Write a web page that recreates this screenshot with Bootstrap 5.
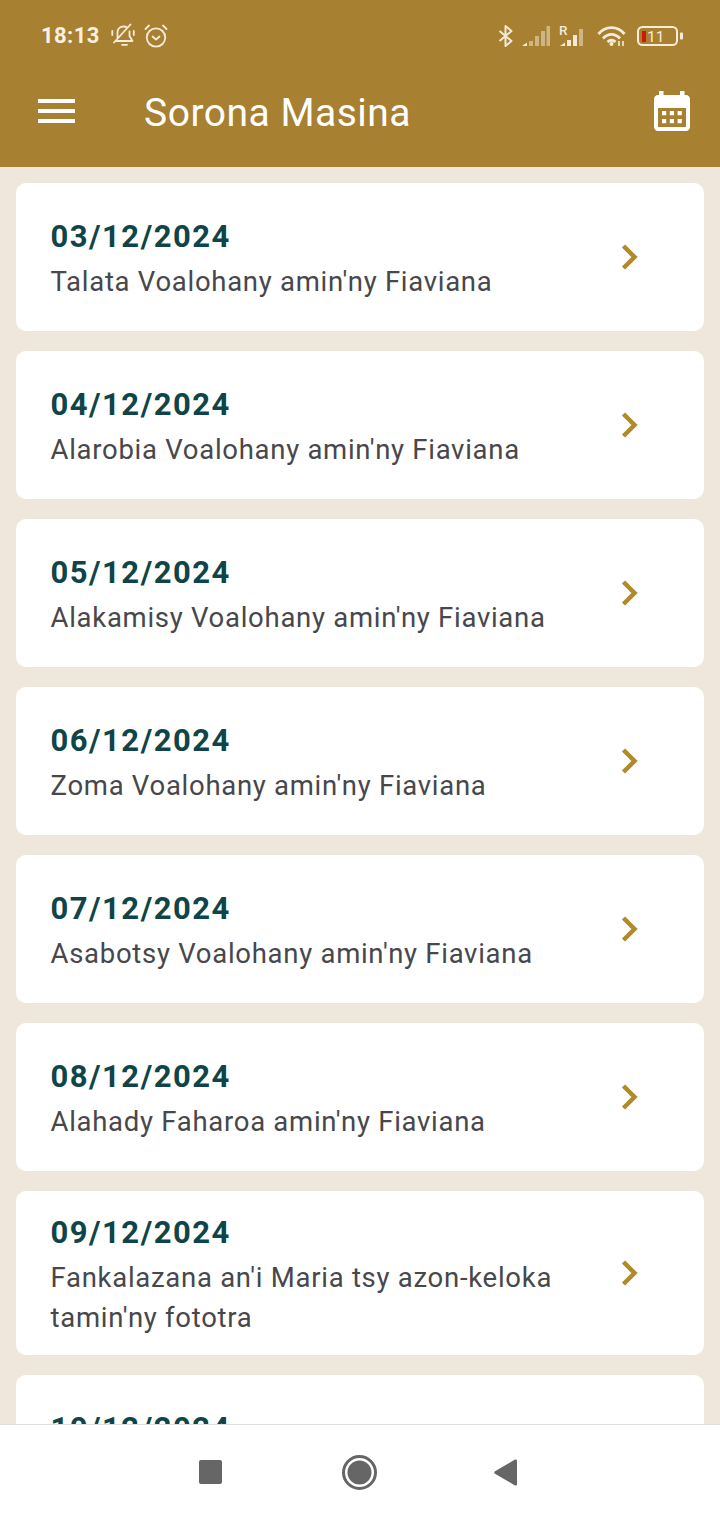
<!DOCTYPE html>
<html lang="mg">
<head>
<meta charset="utf-8">
<title>Sorona Masina</title>
<link href="https://cdn.jsdelivr.net/npm/bootstrap@5.3.0/dist/css/bootstrap.min.css" rel="stylesheet">
<style>
html,body{height:1520px;overflow:hidden}
body{font-family:Roboto,"Liberation Sans",sans-serif;background:#fff}
.screen{height:1520px}
.top-area{background:#a78032;height:167px;flex:none}
.status-bar{height:71px;padding:0 37px 0 41px;color:#fbf1e1}
.clock{font-size:22px;font-weight:700;letter-spacing:.4px;line-height:1;margin-right:10px}
.app-bar{height:96px;padding:0 30px 16px 38px}
.app-title{font-size:39px;font-weight:400;color:#fff;margin:4px 0 0 69px;line-height:1;letter-spacing:.5px}
.feed{background:#efe7dc;padding:16px 16px 0;gap:20px;overflow:hidden;flex:1 1 0;min-height:0}
.day-item{border:0;border-radius:10px;background:#fff;flex:none;padding:33px 65px 0 34.500px;min-height:148px}
.day-item.two-line{min-height:164px;padding-top:21px}
.day-date{font-size:31px;font-weight:700;color:#0f4548;line-height:42px;letter-spacing:1.5px}
.day-name{font-size:27.500px;color:#47474c;line-height:40px;letter-spacing:.72px;margin-top:4px}
.chev-mark{margin-top:28px}
.two-line .chev-mark{margin-top:48px}
.bottom-nav{height:96px;flex:none;background:#fff;border-top:1px solid #dedede;padding:0 4px 1px 0}
.ico{display:block;flex:none}
.gap-a{margin-left:9px}
.gap-b{margin-left:10px}
.roam-sig{margin-top:-4px}
.nav-mid{margin-left:120px}
.nav-end{margin-left:117px}
</style>
</head>
<body>
<div class="screen d-flex flex-column">
  <header class="top-area">
    <div class="status-bar d-flex align-items-center">
      <span class="clock">18:13</span>
      <svg class="ico me-2" width="26" height="26" viewBox="0 0 26 26" fill="none" stroke="#f7ecd9" stroke-width="1.800" stroke-linecap="round" stroke-linejoin="round"><path d="M7.500 15V9.500C7.500 6 10 3.500 13.500 3.500c1.500 0 2.800.5 3.800 1.300M19.500 8.500V13l3 5H6.500M4 19.500 20.500 1.500M12 21.800h5M2.300 8v4M23.800 8v4"/></svg>
      <svg class="ico" width="24" height="26" viewBox="0 0 24 26" fill="none" stroke="#f7ecd9" stroke-width="1.800" stroke-linecap="round" stroke-linejoin="round"><circle cx="12" cy="14.500" r="9.200"/><path d="M8.500 13.500l3.500 3 3.500-3M1.500 6 5 2.500M22.500 6 19 2.500"/></svg>
      <span class="ms-auto d-flex align-items-center">
        <svg class="ico" width="15" height="22" viewBox="0 0 15 22" fill="none" stroke="#f5e9d6" stroke-width="2" stroke-linejoin="round"><path d="M1.500 6l12 10-6 5V1l6 5-12 10"/></svg>
        <svg class="ico gap-a" width="28" height="20" viewBox="0 0 28 20" fill="#f5e9d6"><path d="M0 20l5-3.500V20z"/><g opacity=".5"><path d="M7 15h4v5H7zM13 10h4v10h-4zM19 5h4v15h-4zM24.500 0H28v20h-3.500z"/></g></svg>
        <svg class="ico gap-a roam-sig" width="28" height="24" viewBox="0 -4 28 24" fill="#f5e9d6"><text x="0" y="9" font-family="Roboto,sans-serif" font-size="13.500" font-weight="500" fill="#f5e9d6">R</text><path d="M1 20l5-3.500V20zM8 14h4v6H8zM14 9h4v11h-4z"/><path opacity=".5" d="M20 3h4v17h-4z"/></svg>
        <svg class="ico gap-b" width="30" height="20" viewBox="0 0 30 20" fill="none" stroke="#f7ecd9" stroke-width="2.800"><path d="M1.500 8C8.500-.5 20.500-.5 27.500 8M6 12.500c5-5.500 12-5.500 17 0M10.500 16c2.500-2.300 5.500-2.300 8 0"/><circle cx="14.500" cy="18" r="2" fill="#f7ecd9" stroke="none"/><path d="M22 15v5M26 15v5" stroke-width="1.600"/></svg>
        <svg class="ico gap-b" width="46" height="20" viewBox="0 0 46 20"><rect x="1" y="1" width="39" height="18" rx="4.500" fill="none" stroke="#f7ecd9" stroke-width="2"/><rect x="5" y="5" width="4" height="11" fill="#d4160c"/><text x="10" y="16" font-family="Roboto,sans-serif" font-size="15.500" fill="#f7ecd9">11</text><rect x="43" y="6.500" width="3" height="7" rx="1" fill="#f7ecd9"/></svg>
      </span>
    </div>
    <div class="app-bar d-flex align-items-center">
      <svg class="ico" width="37" height="24" viewBox="0 0 37 24" fill="#fff"><path d="M0 0h37v4H0zM0 10h37v4H0zM0 20h37v4H0z"/></svg>
      <h1 class="app-title">Sorona Masina</h1>
      <svg class="ico ms-auto" width="36" height="40" viewBox="0 0 36 40" fill="#fff"><path fill-rule="evenodd" d="M5 0h4.500v4h16.500V0h4.500v4H32c2.200 0 4 1.800 4 4v28c0 2.200-1.800 4-4 4H4c-2.200 0-4-1.800-4-4V8c0-2.200 1.800-4 4-4h1zM4 17v19h28V17z"/><path d="M8 20h4.200v4.200H8zM15.800 20H20v4.200h-4.200zM23.600 20h4.200v4.200h-4.200zM8 28h4.200v4.200H8zM15.800 28H20v4.200h-4.200zM23.600 28h4.200v4.200h-4.200z"/></svg>
    </div>
  </header>

  <main class="feed d-flex flex-column">
    <a class="card day-item text-decoration-none flex-row justify-content-between" href="#"><span><span class="d-block day-date">03/12/2024</span><span class="d-block day-name">Talata Voalohany amin'ny Fiaviana</span></span><svg class="ico chev-mark" width="18" height="26" viewBox="0 0 18 26" fill="none" stroke="#b18a2a" stroke-width="4.500"><path d="M2.500 2 13.500 13 2.500 24"/></svg></a>
    <a class="card day-item text-decoration-none flex-row justify-content-between" href="#"><span><span class="d-block day-date">04/12/2024</span><span class="d-block day-name">Alarobia Voalohany amin'ny Fiaviana</span></span><svg class="ico chev-mark" width="18" height="26" viewBox="0 0 18 26" fill="none" stroke="#b18a2a" stroke-width="4.500"><path d="M2.500 2 13.500 13 2.500 24"/></svg></a>
    <a class="card day-item text-decoration-none flex-row justify-content-between" href="#"><span><span class="d-block day-date">05/12/2024</span><span class="d-block day-name">Alakamisy Voalohany amin'ny Fiaviana</span></span><svg class="ico chev-mark" width="18" height="26" viewBox="0 0 18 26" fill="none" stroke="#b18a2a" stroke-width="4.500"><path d="M2.500 2 13.500 13 2.500 24"/></svg></a>
    <a class="card day-item text-decoration-none flex-row justify-content-between" href="#"><span><span class="d-block day-date">06/12/2024</span><span class="d-block day-name">Zoma Voalohany amin'ny Fiaviana</span></span><svg class="ico chev-mark" width="18" height="26" viewBox="0 0 18 26" fill="none" stroke="#b18a2a" stroke-width="4.500"><path d="M2.500 2 13.500 13 2.500 24"/></svg></a>
    <a class="card day-item text-decoration-none flex-row justify-content-between" href="#"><span><span class="d-block day-date">07/12/2024</span><span class="d-block day-name">Asabotsy Voalohany amin'ny Fiaviana</span></span><svg class="ico chev-mark" width="18" height="26" viewBox="0 0 18 26" fill="none" stroke="#b18a2a" stroke-width="4.500"><path d="M2.500 2 13.500 13 2.500 24"/></svg></a>
    <a class="card day-item text-decoration-none flex-row justify-content-between" href="#"><span><span class="d-block day-date">08/12/2024</span><span class="d-block day-name">Alahady Faharoa amin'ny Fiaviana</span></span><svg class="ico chev-mark" width="18" height="26" viewBox="0 0 18 26" fill="none" stroke="#b18a2a" stroke-width="4.500"><path d="M2.500 2 13.500 13 2.500 24"/></svg></a>
    <a class="card day-item two-line text-decoration-none flex-row justify-content-between" href="#"><span><span class="d-block day-date">09/12/2024</span><span class="d-block day-name">Fankalazana an'i Maria tsy azon-keloka<br>tamin'ny fototra</span></span><svg class="ico chev-mark" width="18" height="26" viewBox="0 0 18 26" fill="none" stroke="#b18a2a" stroke-width="4.500"><path d="M2.500 2 13.500 13 2.500 24"/></svg></a>
    <a class="card day-item text-decoration-none flex-row justify-content-between" href="#"><span><span class="d-block day-date">10/12/2024</span></span></a>
  </main>

  <nav class="bottom-nav d-flex align-items-center justify-content-center">
    <svg class="ico" width="23" height="24" viewBox="0 0 23 24" fill="#666"><rect width="23" height="24" rx="2"/></svg>
    <svg class="ico nav-mid" width="35" height="35" viewBox="0 0 35 35"><circle cx="17.500" cy="17.500" r="16" fill="none" stroke="#666" stroke-width="3"/><circle cx="17.500" cy="17.500" r="12" fill="#666"/></svg>
    <svg class="ico nav-end" width="23" height="27" viewBox="0 0 23 27" fill="#666"><path d="M23 2c0-1.200-1-2-2-1.400L1 12.300c-1 .6-1 1.800 0 2.400l20 11.700c1 .6 2-.2 2-1.400z"/></svg>
  </nav>
</div>
<script src="https://cdn.jsdelivr.net/npm/bootstrap@5.3.0/dist/js/bootstrap.bundle.min.js"></script>
</body>
</html>
